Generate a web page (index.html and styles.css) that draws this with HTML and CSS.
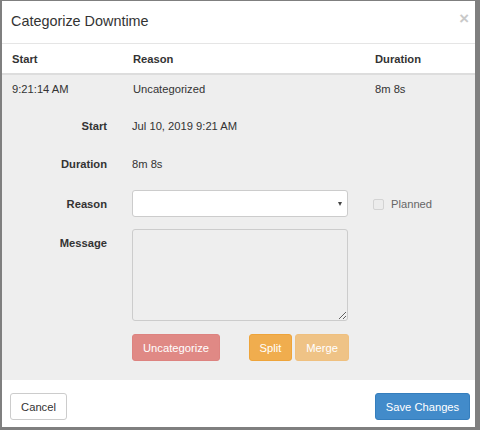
FILE: index.html
```html
<!DOCTYPE html>
<html>
<head>
<meta charset="utf-8">
<link rel="stylesheet" href="styles.css">
</head>
<body>
<div class="modal">
  <div class="modal-header">
    <h4 class="modal-title">Categorize Downtime</h4>
    <span class="close">×</span>
  </div>
  <div class="grid-row head">
    <div class="cell">Start</div>
    <div class="cell">Reason</div>
    <div class="cell">Duration</div>
  </div>
  <div class="active-area">
    <div class="grid-row">
      <div class="cell">9:21:14 AM</div>
      <div class="cell">Uncategorized</div>
      <div class="cell">8m 8s</div>
    </div>
    <div class="detail">
      <div class="form-row r-start">
        <div class="label">Start</div>
        <div class="static">Jul 10, 2019 9:21 AM</div>
      </div>
      <div class="form-row r-dur">
        <div class="label">Duration</div>
        <div class="static">8m 8s</div>
      </div>
      <div class="form-row r-reason">
        <div class="label">Reason</div>
        <div class="select"><span class="arrow"></span></div>
        <div class="check"><span class="box"></span><span class="check-label">Planned</span></div>
      </div>
      <div class="form-row r-msg">
        <div class="label">Message</div>
        <textarea class="textarea" readonly></textarea>
      </div>
      <div class="form-row r-btns">
        <div></div>
        <div class="btn-line">
          <span class="btn btn-danger disabled">Uncategorize</span>
          <div class="btn-group">
            <span class="btn btn-warning">Split</span>
            <span class="btn btn-warning disabled">Merge</span>
          </div>
        </div>
      </div>
    </div>
  </div>
  <div class="modal-footer">
    <span class="btn btn-default">Cancel</span>
    <span class="btn btn-primary">Save Changes</span>
  </div>
</div>
</body>
</html>
```
FILE: styles.css
```css
html, body {
  margin: 0;
  padding: 0;
}
body {
  background: #7f7f7f;
  width: 480px;
  height: 430px;
  padding: 1px 0 0 2px;
  box-sizing: border-box;
  font-family: "Liberation Sans", Arial, sans-serif;
  font-size: 11.2px;
  line-height: 16px;
  color: #333;
  overflow: hidden;
}
.modal {
  width: 473px;
  height: 426px;
  background: #fff;
  display: flex;
  flex-direction: column;
}
.modal-header {
  height: 42px;
  border-bottom: 1px solid #e5e5e5;
  display: flex;
  align-items: center;
  justify-content: space-between;
  padding: 0 6px 0 9px;
  box-sizing: content-box;
}
.modal-title {
  margin: 0;
  font-size: 14.4px;
  font-weight: normal;
  line-height: 20px;
  margin-top: -3px;
}
.close {
  font-size: 16.8px;
  font-weight: bold;
  color: #c9c9c9;
  margin-top: -7px;
}
.grid-row {
  display: grid;
  grid-template-columns: 121px 242px 1fr;
}
.cell {
  padding: 6px 10px 7px;
}
.head {
  font-weight: bold;
  border-bottom: 2px solid #ddd;
}
.head .cell {
  padding: 7px 10px 6px;
}
.active-area {
  background: #eee;
  flex: 1;
}
.detail {
  padding-top: 8px;
}
.form-row {
  display: grid;
  grid-template-columns: 105px 216px auto;
  column-gap: 25px;
  margin-bottom: 12px;
}
.label {
  font-weight: bold;
  text-align: right;
  padding-top: 6px;
}
.static {
  padding-top: 6px;
}
.r-start { height: 26px; }
.r-dur { height: 28px; }
.r-reason { height: 27px; margin-bottom: 12px; }
.select {
  height: 27px;
  box-sizing: border-box;
  background: #fff;
  border: 1px solid #ccc;
  border-radius: 3px;
  position: relative;
}
.arrow {
  position: absolute;
  right: 5px;
  top: 11px;
  width: 0;
  height: 0;
  border-left: 2.5px solid transparent;
  border-right: 2.5px solid transparent;
  border-top: 4px solid #444;
}
.check {
  display: flex;
  align-items: center;
  gap: 7px;
  padding-top: 1px;
}
.box {
  width: 9px;
  height: 9px;
  border: 1px solid #d3d3d3;
  border-radius: 2px;
  background: #ececec;
}
.check-label {
  color: #666;
}
.textarea {
  display: block;
  width: 216px;
  height: 92px;
  box-sizing: border-box;
  background: #eee;
  border: 1px solid #ccc;
  border-radius: 3px;
  margin: 0;
  padding: 0;
  font: inherit;
  resize: both;
  outline: none;
}
.r-msg { margin-bottom: 13px; }
.btn-line {
  display: flex;
  justify-content: space-between;
  width: 217px;
}
.btn-group {
  display: flex;
  gap: 3px;
}
.btn {
  display: inline-flex;
  align-items: center;
  justify-content: center;
  height: 27px;
  box-sizing: border-box;
  padding: 0 9px;
  border: 1px solid transparent;
  border-radius: 3px;
  color: #fff;
  white-space: nowrap;
}
.btn-danger.disabled {
  background: #e08985;
  border-color: #dd8380;
  width: 88px;
}
.btn-warning {
  background: #f0ad4e;
  border-color: #eea43a;
  width: 43px;
}
.btn-warning.disabled {
  background: #efc386;
  border-color: #efc07f;
  width: 54px;
}
.modal-footer {
  height: 47px;
  box-sizing: border-box;
  padding: 13px 5px 0 8px;
  display: flex;
  justify-content: space-between;
  align-items: flex-start;
}
.btn-default {
  background: #fff;
  border-color: #ccc;
  color: #333;
  width: 57px;
}
.btn-primary {
  background: #428bca;
  border-color: #357ebd;
  width: 95px;
}
```
